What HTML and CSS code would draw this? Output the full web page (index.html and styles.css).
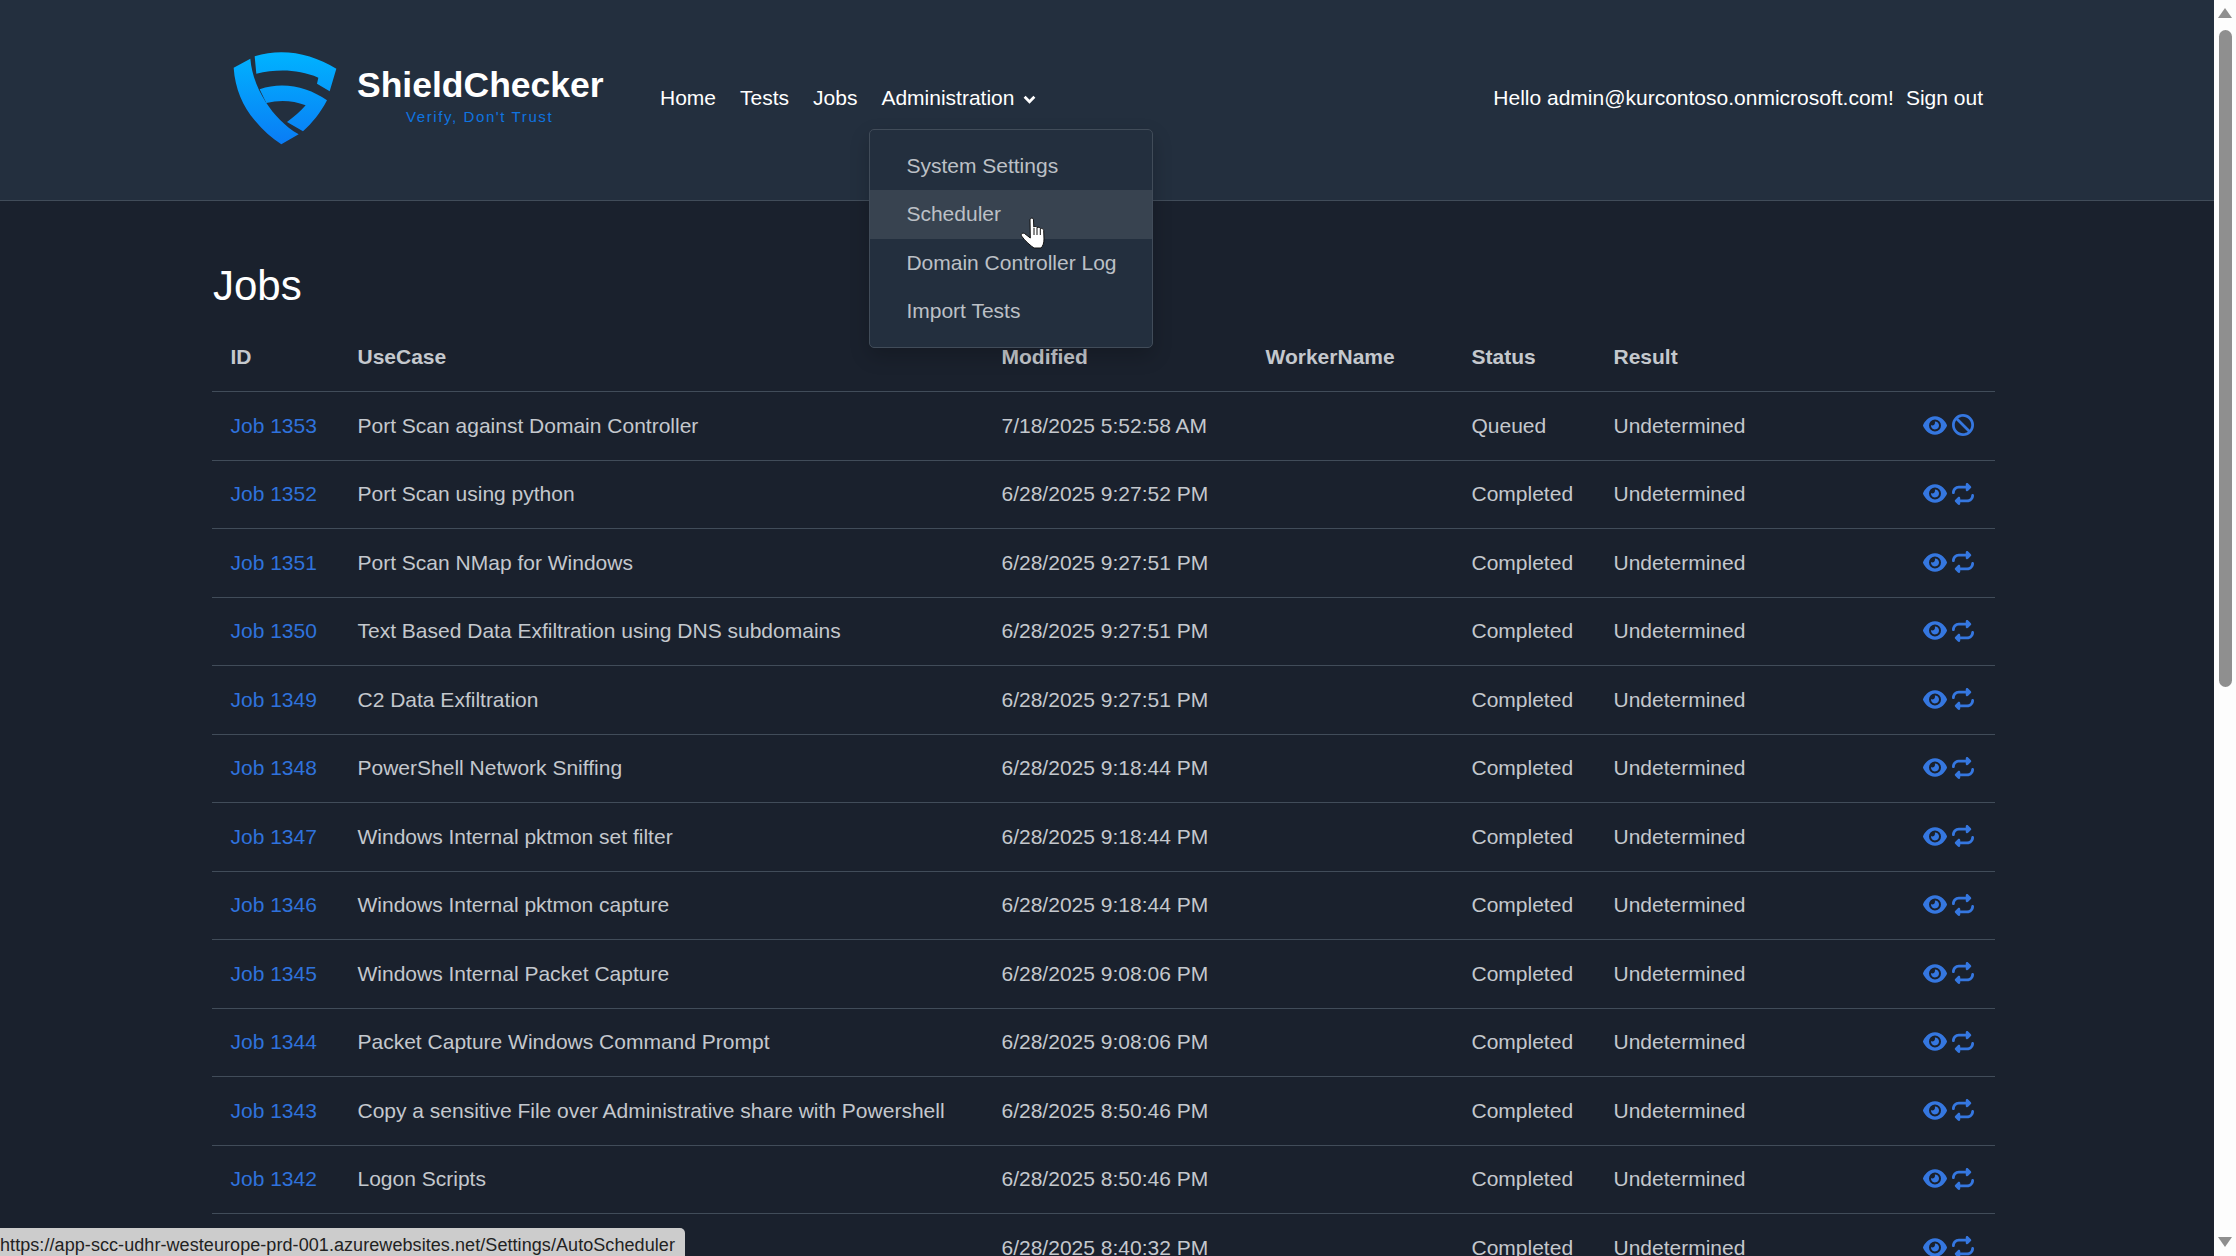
FILE: index.html
```html
<!DOCTYPE html>
<html lang="en">
<head>
    <meta charset="UTF-8">
    <title>Jobs - ShieldChecker</title>
    <link rel="stylesheet" href="styles.css">
</head>
<body>
    <!-- Icon sprites -->
    <svg class="sprites" aria-hidden="true">
        <symbol id="i-eye" viewBox="0 32 576 448"><path d="M288 32c-80.800 0-145.500 36.800-192.600 80.600C48.600 156 17.300 208 2.500 243.700c-3.300 7.900-3.300 16.700 0 24.600C17.300 304 48.600 356 95.400 399.400C142.500 443.200 207.200 480 288 480s145.500-36.800 192.600-80.600c46.800-43.500 78.100-95.400 93-131.100c3.300-7.900 3.300-16.700 0-24.600c-14.900-35.700-46.200-87.700-93-131.100C433.500 68.800 368.800 32 288 32zM144 256a144 144 0 1 1 288 0 144 144 0 1 1 -288 0zm144-64c0 35.300-28.700 64-64 64c-7.100 0-13.900-1.200-20.300-3.300c-5.500-1.800-11.900 1.600-11.700 7.400c.3 6.900 1.300 13.800 3.200 20.700c13.700 51.200 66.400 81.600 117.600 67.900s81.600-66.400 67.900-117.600c-11.100-41.500-47.800-69.400-88.600-71.100c-5.800-.2-9.200 6.100-7.400 11.700c2.100 6.400 3.300 13.200 3.300 20.300z"/></symbol>
        <symbol id="i-ban" viewBox="0 0 512 512"><path d="M367.200 412.500L99.500 144.800C77.100 176.100 64 214.500 64 256c0 106 86 192 192 192c41.500 0 79.900-13.100 111.200-35.500zm45.300-45.300C434.900 335.900 448 297.500 448 256c0-106-86-192-192-192c-41.500 0-79.900 13.100-111.200 35.500L412.500 367.200zM0 256a256 256 0 1 1 512 0A256 256 0 1 1 0 256z"/></symbol>
        <symbol id="i-repeat" viewBox="0 0 512 512"><path d="M0 224c0 17.700 14.300 32 32 32s32-14.300 32-32c0-53 43-96 96-96H320v32c0 12.900 7.800 24.600 19.800 29.600s25.700 2.200 34.900-6.900l64-64c12.500-12.500 12.500-32.800 0-45.300l-64-64c-9.200-9.200-22.900-11.900-34.900-6.900S320 19.100 320 32V64H160C71.600 64 0 135.600 0 224zm512 64c0-17.700-14.300-32-32-32s-32 14.300-32 32c0 53-43 96-96 96H192V352c0-12.900-7.800-24.600-19.800-29.600s-25.700-2.200-34.900 6.900l-64 64c-12.500 12.500-12.500 32.800 0 45.300l64 64c9.200 9.200 22.900 11.900 34.900 6.900s19.800-16.600 19.800-29.600V448H352c88.400 0 160-71.600 160-160z"/></symbol>
    </svg>

    <div class="page">
        <!-- Top navigation -->
        <header class="topbar">
            <a class="brand" href="#">
                <svg class="brand-mark" viewBox="100 92 312 282">
                    <defs>
                        <linearGradient id="shield" gradientUnits="userSpaceOnUse" x1="0" y1="92" x2="0" y2="372">
                            <stop offset="0" stop-color="#00b4ff"/>
                            <stop offset="1" stop-color="#0a7cf5"/>
                        </linearGradient>
                    </defs>
                    <path fill="url(#shield)" d="M152 115L102 142C106 205 130 258 165 300C190 331 218 355 245 372L297 342C255 318 222 282 198 245C172 204 156 160 152 115Z"/>
                    <path fill="url(#shield)" d="M165 108C250 82 335 100 410 145L390 213L352 190L356 172C295 146 232 146 170 160Z"/>
                    <path fill="url(#shield)" d="M180 207C250 182 325 200 382 240C362 278 338 308 310 333L262 305C283 290 302 274 318 255C280 240 240 238 200 248Z"/>
                </svg>
                <span class="brand-text">
                    <span class="brand-name">ShieldChecker</span>
                    <span class="brand-tag">Verify, Don't Trust</span>
                </span>
            </a>
            <nav class="nav">
                <a href="#">Home</a>
                <a href="#">Tests</a>
                <a href="#">Jobs</a>
                <div class="nav-menu">
                    <a href="#">Administration
                        <svg class="chevron" viewBox="0 0 12 8"><path d="M1.500 1.500L6 6l4.500-4.500" fill="none" stroke="currentColor" stroke-width="2.600"/></svg>
                    </a>
                    <div class="dropdown">
                        <a href="#">System Settings</a>
                        <a href="#" class="hover">Scheduler</a>
                        <a href="#">Domain Controller Log</a>
                        <a href="#">Import Tests</a>
                        <svg class="cursor" viewBox="0 0 25 32">
                            <path d="M10 3C10 .5 13.500 .5 13.500 3L13.800 10C15 9 16.800 9.500 17 10.500C18.500 9.800 20 10.500 20.300 11.500C21.800 11 23.500 12 23.700 13.500L24 22C24 26 23 29 21 31L14 31C11 29 5 24 1.500 19C.5 17 2.500 15.500 4.500 16.500L10.300 21Z" fill="#fff" stroke="#111" stroke-width="1"/>
                            <path d="M14 11v7M17 11v7M20.300 12v6" stroke="#111" stroke-width="1" fill="none"/>
                        </svg>
                    </div>
                </div>
            </nav>
            <div class="user">
                <span>Hello admin@kurcontoso.onmicrosoft.com!</span>
                <a href="#">Sign out</a>
            </div>
        </header>

        <!-- Jobs list -->
        <main class="content">
            <h1>Jobs</h1>
            <table class="jobs">
                <thead>
                    <tr>
                        <th class="c-id">ID</th>
                        <th class="c-case">UseCase</th>
                        <th class="c-mod">Modified</th>
                        <th class="c-worker">WorkerName</th>
                        <th class="c-status">Status</th>
                        <th class="c-result">Result</th>
                        <th class="c-act"></th>
                    </tr>
                </thead>
                <tbody>
                    <tr><td><a href="#">Job 1353</a></td><td>Port Scan against Domain Controller</td><td>7/18/2025 5:52:58 AM</td><td></td><td>Queued</td><td>Undetermined</td><td class="icons"><svg class="ico eye"><use href="#i-eye"/></svg><svg class="ico"><use href="#i-ban"/></svg></td></tr>
                    <tr><td><a href="#">Job 1352</a></td><td>Port Scan using python</td><td>6/28/2025 9:27:52 PM</td><td></td><td>Completed</td><td>Undetermined</td><td class="icons"><svg class="ico eye"><use href="#i-eye"/></svg><svg class="ico"><use href="#i-repeat"/></svg></td></tr>
                    <tr><td><a href="#">Job 1351</a></td><td>Port Scan NMap for Windows</td><td>6/28/2025 9:27:51 PM</td><td></td><td>Completed</td><td>Undetermined</td><td class="icons"><svg class="ico eye"><use href="#i-eye"/></svg><svg class="ico"><use href="#i-repeat"/></svg></td></tr>
                    <tr><td><a href="#">Job 1350</a></td><td>Text Based Data Exfiltration using DNS subdomains</td><td>6/28/2025 9:27:51 PM</td><td></td><td>Completed</td><td>Undetermined</td><td class="icons"><svg class="ico eye"><use href="#i-eye"/></svg><svg class="ico"><use href="#i-repeat"/></svg></td></tr>
                    <tr><td><a href="#">Job 1349</a></td><td>C2 Data Exfiltration</td><td>6/28/2025 9:27:51 PM</td><td></td><td>Completed</td><td>Undetermined</td><td class="icons"><svg class="ico eye"><use href="#i-eye"/></svg><svg class="ico"><use href="#i-repeat"/></svg></td></tr>
                    <tr><td><a href="#">Job 1348</a></td><td>PowerShell Network Sniffing</td><td>6/28/2025 9:18:44 PM</td><td></td><td>Completed</td><td>Undetermined</td><td class="icons"><svg class="ico eye"><use href="#i-eye"/></svg><svg class="ico"><use href="#i-repeat"/></svg></td></tr>
                    <tr><td><a href="#">Job 1347</a></td><td>Windows Internal pktmon set filter</td><td>6/28/2025 9:18:44 PM</td><td></td><td>Completed</td><td>Undetermined</td><td class="icons"><svg class="ico eye"><use href="#i-eye"/></svg><svg class="ico"><use href="#i-repeat"/></svg></td></tr>
                    <tr><td><a href="#">Job 1346</a></td><td>Windows Internal pktmon capture</td><td>6/28/2025 9:18:44 PM</td><td></td><td>Completed</td><td>Undetermined</td><td class="icons"><svg class="ico eye"><use href="#i-eye"/></svg><svg class="ico"><use href="#i-repeat"/></svg></td></tr>
                    <tr><td><a href="#">Job 1345</a></td><td>Windows Internal Packet Capture</td><td>6/28/2025 9:08:06 PM</td><td></td><td>Completed</td><td>Undetermined</td><td class="icons"><svg class="ico eye"><use href="#i-eye"/></svg><svg class="ico"><use href="#i-repeat"/></svg></td></tr>
                    <tr><td><a href="#">Job 1344</a></td><td>Packet Capture Windows Command Prompt</td><td>6/28/2025 9:08:06 PM</td><td></td><td>Completed</td><td>Undetermined</td><td class="icons"><svg class="ico eye"><use href="#i-eye"/></svg><svg class="ico"><use href="#i-repeat"/></svg></td></tr>
                    <tr><td><a href="#">Job 1343</a></td><td>Copy a sensitive File over Administrative share with Powershell</td><td>6/28/2025 8:50:46 PM</td><td></td><td>Completed</td><td>Undetermined</td><td class="icons"><svg class="ico eye"><use href="#i-eye"/></svg><svg class="ico"><use href="#i-repeat"/></svg></td></tr>
                    <tr><td><a href="#">Job 1342</a></td><td>Logon Scripts</td><td>6/28/2025 8:50:46 PM</td><td></td><td>Completed</td><td>Undetermined</td><td class="icons"><svg class="ico eye"><use href="#i-eye"/></svg><svg class="ico"><use href="#i-repeat"/></svg></td></tr>
                    <!-- ID and UseCase of this row sit under the link preview -->
                    <tr><td></td><td></td><td>6/28/2025 8:40:32 PM</td><td></td><td>Completed</td><td>Undetermined</td><td class="icons"><svg class="ico eye"><use href="#i-eye"/></svg><svg class="ico"><use href="#i-repeat"/></svg></td></tr>
                </tbody>
            </table>
        </main>

        <!-- Browser link preview -->
        <div class="status-link">https://app-scc-udhr-westeurope-prd-001.azurewebsites.net/Settings/AutoScheduler</div>
    </div>

    <!-- Browser scrollbar -->
    <div class="scrollbar">
        <span class="arrow up"></span>
        <div class="track"><div class="thumb"></div></div>
        <span class="arrow down"></span>
    </div>
</body>
</html>
```

FILE: styles.css
```css
/* General page styles */
html, body {
    height: 100%;
}

body {
    margin: 0;
    display: flex;
    overflow: hidden;
    background-color: #1a212d;
    color: #c4c8cd;
    font-family: "Liberation Sans", Arial, sans-serif;
    font-size: 21px;
    line-height: 30px;
}

a {
    color: inherit;
    text-decoration: none;
}

.sprites {
    display: none;
}

.page {
    position: relative;
    flex: 1;
    min-width: 0;
    overflow: hidden;
}

/* Top navigation */
.topbar {
    display: flex;
    align-items: center;
    height: 201px;
    padding: 0 231px 5px 233px;
    box-sizing: border-box;
    background-color: #232f3e;
    border-bottom: 1px solid #414c59;
    color: #fff;
}

.brand {
    display: flex;
    align-items: flex-start;
    width: 427px;
    height: 92px;
    margin-top: -1px;
}

.brand-mark {
    width: 104px;
    height: 94px;
    margin-right: 20px;
}

.brand-text {
    display: flex;
    flex-direction: column;
    margin-top: 13px;
}

.brand-name {
    font-size: 35.500px;
    font-weight: bold;
    line-height: 42px;
}

.brand-tag {
    margin: 2px 0 0 49px;
    color: #0f74e0;
    font-size: 15px;
    line-height: 18px;
    letter-spacing: 1.600px;
}

.nav {
    display: flex;
    align-items: center;
    gap: 24px;
}

.nav-menu {
    position: relative;
}

.chevron {
    width: 13px;
    height: 9px;
    margin-left: 3px;
    vertical-align: 1px;
}

.user {
    display: flex;
    gap: 12px;
    margin-left: auto;
}

/* Administration dropdown */
.dropdown {
    position: absolute;
    top: 46px;
    left: -12px;
    width: 284px;
    height: 219px;
    box-sizing: border-box;
    padding: 12px 0;
    background-color: #232f3e;
    border: 1px solid #414c59;
    border-radius: 5px;
    box-shadow: 0 8px 20px rgba(0, 0, 0, 0.2);
    color: #bcc0c6;
    white-space: nowrap;
    z-index: 5;
}

.dropdown a {
    display: block;
    height: 48.500px;
    padding: 0 36px;
    line-height: 48px;
}

.dropdown a.hover {
    background-color: #384350;
}

.cursor {
    position: absolute;
    top: 87px;
    left: 150px;
    width: 25px;
    height: 32px;
}

/* Jobs table */
.content {
    padding: 0 219px 0 212px;
}

h1 {
    margin: 0;
    padding-top: 61px;
    padding-left: 1px;
    color: #fff;
    font-size: 42px;
    font-weight: normal;
    line-height: 48px;
}

.jobs {
    width: 100%;
    margin-top: 13px;
    border-collapse: collapse;
    table-layout: fixed;
}

.jobs th,
.jobs td {
    height: 68.500px;
    padding: 0 18px 0 18.500px;
    box-sizing: border-box;
    border-bottom: 1px solid #414c59;
    text-align: left;
    white-space: nowrap;
}

.jobs th {
    font-weight: bold;
}

.jobs td a {
    color: #2f72dc;
}

.c-id { width: 127px; }
.c-case { width: 644px; }
.c-mod { width: 264px; }
.c-worker { width: 206px; }
.c-status { width: 142px; }
.c-result { width: 309px; }

.jobs .icons {
    padding-left: 19px;
    padding-bottom: 1px;
    font-size: 0;
}

.ico {
    width: 22px;
    height: 22px;
    margin-left: 5px;
    fill: #3577e0;
    vertical-align: middle;
}

.eye {
    width: 24px;
    height: 19px;
    margin-left: 0;
}

/* Browser link preview */
.status-link {
    position: absolute;
    left: 0;
    bottom: 0;
    width: 685px;
    height: 28px;
    box-sizing: border-box;
    background-color: #ccc;
    border-top-right-radius: 5px;
    color: #222;
    font-size: 18px;
    line-height: 34px;
    letter-spacing: 0.070px;
    white-space: nowrap;
    overflow: hidden;
}

/* Browser scrollbar */
.scrollbar {
    display: flex;
    flex-direction: column;
    align-items: center;
    width: 22px;
    height: 100%;
    background-color: #fdfdfd;
}

.track {
    flex: 1;
    width: 13px;
}

.thumb {
    width: 13px;
    height: 657px;
    margin-top: 12px;
    border-radius: 7px;
    background-color: #8f8f8f;
}

.arrow {
    width: 0;
    height: 0;
    margin: 8px 0 0;
    border-left: 7px solid transparent;
    border-right: 7px solid transparent;
}

.arrow.up {
    border-bottom: 10px solid #8f8f8f;
}

.arrow.down {
    margin: 0 0 9px;
    border-top: 10px solid #8f8f8f;
}
```
